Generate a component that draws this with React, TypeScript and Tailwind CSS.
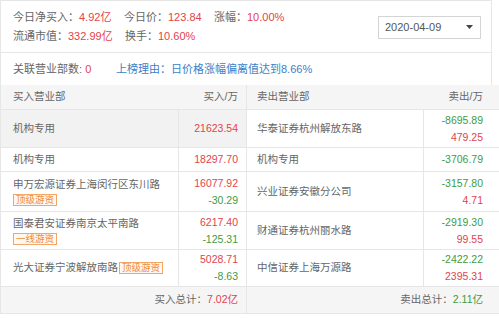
import React from "react";

const RED = "text-[#e3434b]";
const GREEN = "text-[#3f9b42]";

type V = [string, "r" | "g"];

function Tag({ text }: { text: string }) {
  return (
    <span className="inline-block border border-[#f3a765] bg-[#fff8f0] text-[#ef8a35] text-[9.5px] leading-[10px] px-[2px]">
      {text}
    </span>
  );
}

function Vals({ vals, pr }: { vals: V[]; pr: string }) {
  return (
    <div className={`flex flex-col items-end justify-center leading-[17px] h-full ${pr}`}>
      {vals.map(([v, c], i) => (
        <span key={i} className={c === "r" ? RED : GREEN}>
          {v}
        </span>
      ))}
    </div>
  );
}

export default function App() {
  const heights = ["h-[38px]", "h-[24px]", "h-[40px]", "h-[38px]", "h-[37px]"];
  const left: { name: React.ReactNode; vals: V[]; bg?: boolean }[] = [
    { name: "机构专用", vals: [["21623.54", "r"]], bg: true },
    { name: "机构专用", vals: [["18297.70", "r"]] },
    {
      name: (
        <div className="flex flex-col items-start gap-[2px]">
          <span className="leading-[15px]">申万宏源证券上海闵行区东川路</span>
          <Tag text="顶级游资" />
        </div>
      ),
      vals: [["16077.92", "r"], ["-30.29", "g"]],
    },
    {
      name: (
        <div className="flex flex-col items-start gap-[2px]">
          <span className="leading-[15px]">国泰君安证券南京太平南路</span>
          <Tag text="一线游资" />
        </div>
      ),
      vals: [["6217.40", "r"], ["-125.31", "g"]],
    },
    {
      name: (
        <div className="flex items-center gap-[1px]">
          <span>光大证券宁波解放南路</span>
          <Tag text="顶级游资" />
        </div>
      ),
      vals: [["5028.71", "r"], ["-8.63", "g"]],
    },
  ];
  const right: { name: string; vals: V[] }[] = [
    { name: "华泰证券杭州解放东路", vals: [["-8695.89", "g"], ["479.25", "r"]] },
    { name: "机构专用", vals: [["-3706.79", "g"]] },
    { name: "兴业证券安徽分公司", vals: [["-3157.80", "g"], ["4.71", "r"]] },
    { name: "财通证券杭州丽水路", vals: [["-2919.30", "g"], ["99.55", "r"]] },
    { name: "中信证券上海万源路", vals: [["-2422.22", "g"], ["2395.31", "r"]] },
  ];

  return (
    <div
      className="w-[499px] h-[318px] bg-white overflow-hidden text-[#666]"
      style={{ fontFamily: "'Liberation Sans','Noto Sans CJK SC',sans-serif" }}
    >
      <div className="w-[492px] border-l border-r border-t border-[#e6e6e6] text-[11px]">
        <div className="h-[52px] flex items-center justify-between border-b border-[#e6e6e6] pl-[12px] pr-[10px]">
          <div className="flex flex-col leading-[19px] pt-[1px]">
            <div className="flex">
              <span className="w-[111px] shrink-0">
                今日净买入：<span className={RED}>4.92亿</span>
              </span>
              <span className="w-[90px] shrink-0">
                今日价：<span className={RED}>123.84</span>
              </span>
              <span>
                涨幅：<span className={RED}>10.00%</span>
              </span>
            </div>
            <div className="flex">
              <span className="w-[112px] shrink-0">
                流通市值：<span className={RED}>332.99亿</span>
              </span>
              <span>
                换手：<span className={RED}>10.60%</span>
              </span>
            </div>
          </div>
          <div className="w-[103px] h-[23px] border border-[#d4d4d4] flex items-center justify-between pl-[6px] pr-[7px] text-[#555] mt-[1px]">
            <span>2020-04-09</span>
            <svg width="7" height="4" viewBox="0 0 7 4">
              <path d="M0 0 L7 0 L3.5 4 Z" fill="#444" />
            </svg>
          </div>
        </div>
        <div className="h-[32px] flex items-center pl-[12px]">
          <span className="w-[103px] shrink-0">
            关联营业部数: <span className={RED}>0</span>
          </span>
          <span className="text-[#3b7fc8]">上榜理由：日价格涨幅偏离值达到8.66%</span>
        </div>
      </div>

      <div className="grid grid-cols-[178px_68px_177px_76px] text-[10.5px]">
        <div className="col-span-2 h-[25px] bg-[#f5f5f5] border-b border-l border-[#e6e6e6] flex items-center justify-between pl-[12px] pr-[8px]">
          <span>买入营业部</span>
          <span>买入/万</span>
        </div>
        <div className="col-span-2 h-[25px] bg-[#f5f5f5] border-b border-l border-[#e6e6e6] flex items-center justify-between pl-[10px] pr-[16px]">
          <span>卖出营业部</span>
          <span>卖出/万</span>
        </div>

        {left.map((l, i) => {
          const r = right[i];
          const h = heights[i];
          return (
            <React.Fragment key={i}>
              <div
                className={`${h} ${l.bg ? "bg-[#f2f2f2]" : ""} border-b border-l border-[#e6e6e6] flex items-center pl-[12px]`}
              >
                {l.name}
              </div>
              <div className={`${h} ${l.bg ? "bg-[#f2f2f2]" : ""} border-b border-l border-[#e6e6e6]`}>
                <Vals vals={l.vals} pr="pr-[8px]" />
              </div>
              <div className={`${h} border-b border-l border-[#e6e6e6] flex items-center pl-[10px]`}>{r.name}</div>
              <div className={`${h} border-b border-l border-[#e6e6e6]`}>
                <Vals vals={r.vals} pr="pr-[16px]" />
              </div>
            </React.Fragment>
          );
        })}

        <div className="col-span-2 h-[27px] bg-[#f5f5f5] border-b border-l border-[#e6e6e6] flex items-center justify-end pr-[8px]">
          <span>
            买入总计：<span className={RED}>7.02亿</span>
          </span>
        </div>
        <div className="col-span-2 h-[27px] bg-[#f5f5f5] border-b border-l border-[#e6e6e6] flex items-center justify-end pr-[16px]">
          <span>
            卖出总计：<span className={GREEN}>2.11亿</span>
          </span>
        </div>
      </div>
    </div>
  );
}
